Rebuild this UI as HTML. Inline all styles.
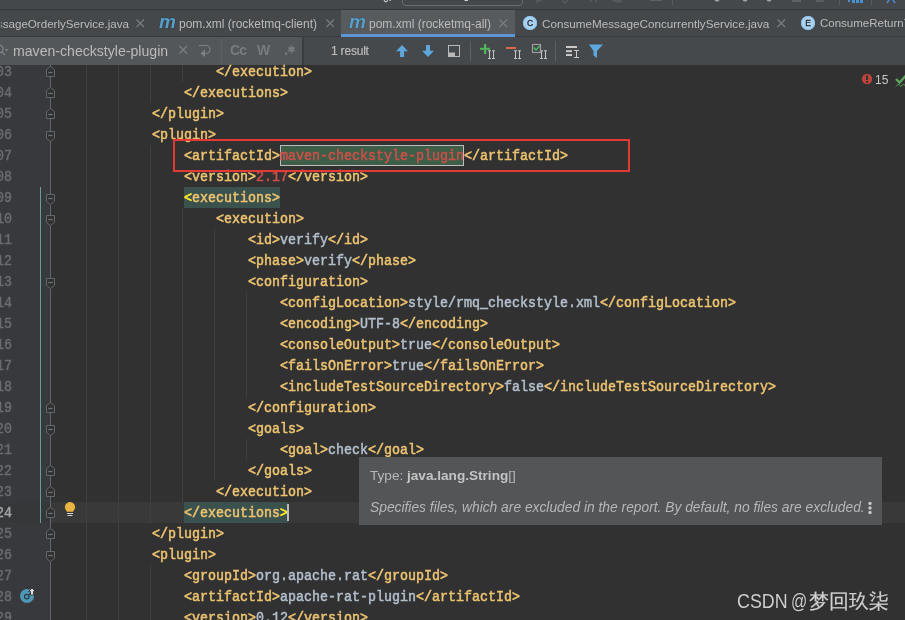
<!DOCTYPE html>
<html><head><meta charset="utf-8">
<style>
*{margin:0;padding:0;box-sizing:border-box}
html,body{width:905px;height:620px;overflow:hidden;background:#313131}
body{position:relative;font-family:"Liberation Sans",sans-serif;-webkit-font-smoothing:antialiased}
.abs{position:absolute}
.ln{position:absolute;height:21px;line-height:21px;white-space:pre;font-family:"Liberation Mono",monospace;font-size:13.333px;}
.sc{display:inline-block;transform:scaleY(1.15);transform-origin:0 16px;position:relative;top:1px}
.num{position:absolute;left:-12px;width:24px;text-align:right;height:21px;line-height:21px;font-family:"Liberation Mono",monospace;font-size:13.333px;color:#696C6F;-webkit-text-stroke:0.4px #696C6F}
.num.cur{color:#A4A3A3;-webkit-text-stroke:0.4px #A4A3A3}
.guide{position:absolute;width:1px;background:#404040}
.wm{top:589px;font-size:19.5px;line-height:24px;color:#CFCFCF;white-space:pre;text-shadow:0 0 1px rgba(0,0,0,0.4)}
.tabtxt{position:absolute;top:12px;height:25px;line-height:25px;font-size:12px;color:#BBBBBB;white-space:pre}
.mic{font:bold italic 19px "Liberation Sans",sans-serif;color:#56A0CB;line-height:25px;text-shadow:0 0 1px rgba(0,0,0,0.55)}
.cic{width:14.2px;height:14.2px;border-radius:50%;background:#A9D3F3;box-shadow:inset 0 0 0 1px #8FC3EC;color:#2B2B2B;font:8.6px "Liberation Sans",sans-serif;-webkit-text-stroke:0.3px #2B2B2B;line-height:14.2px;text-align:center}
</style></head><body><div id="root" style="position:absolute;left:0;top:0;width:905px;height:620px;will-change:transform">
<!-- toolbar -->
<div class="abs" style="left:0;top:0;width:905px;height:9px;background:#45484A"></div>
<div class="abs" style="left:0;top:9px;width:905px;height:1px;background:#343637"></div>

<svg class="abs" style="left:0;top:0" width="905" height="9">
 <path d="M402.5 -6 V2 A3.5 3.5 0 0 0 406 5.5 H519 A3.5 3.5 0 0 0 522.5 2 V-6" fill="none" stroke="#6A6D6F" stroke-width="1"/>
 <rect x="464.5" y="-3" width="3.5" height="4" fill="#D0D0D0"/>
 <path d="M384.3 -3 V0.6 A1.6 1.6 0 0 0 387.4 0.6 V-3" fill="none" stroke="#C8C8C8" stroke-width="1.1"/><rect x="389.5" y="-3" width="1.3" height="4" fill="#C8C8C8"/>
 <path d="M536 -4 L543 0 L536 3 Z" fill="#56595B"/>
 <path d="M562 0 L565 3 M568 0 L565 3" stroke="#5A5D5F" stroke-width="1.2"/>
 <path d="M591 -3 V2 M596 -3 V2" stroke="#5A5D5F" stroke-width="1.5"/>
 <path d="M612 -3 L622 -3 L622 2 L617 3 L612 1 Z" fill="#56595B"/>
 <rect x="650" y="-4" width="12" height="5" fill="#5F6163"/>
 <rect x="672" y="-2" width="1" height="7" fill="#5A5D5F"/>
 <circle cx="717" cy="-1" r="2.5" fill="#9AA6B0"/><circle cx="745" cy="-1" r="2.5" fill="#9AA6B0"/><circle cx="769" cy="-1" r="2.5" fill="#9AA6B0"/>
 <rect x="792" y="-4" width="9" height="6" fill="#5F6163"/>
 <path d="M816 -4 H823 A4 4 0 0 1 823 2 H816 Z" fill="#5A5D5F"/>
 <rect x="839" y="-2" width="1" height="7" fill="#5A5D5F"/>
 <g fill="#4A8FCF"><rect x="848" y="-2" width="2" height="4"/><rect x="852" y="-2" width="3" height="5"/><rect x="856" y="-2" width="3" height="5"/><rect x="860" y="-2" width="3" height="5"/></g>
 <rect x="871" y="-2" width="1" height="7" fill="#5A5D5F"/>
 <path d="M887 3 L891 -3 L895 3" fill="none" stroke="#4A8FCF" stroke-width="1.5"/>
</svg>

<!-- tab bar -->
<div class="abs" style="left:0;top:10px;width:905px;height:26px;background:#45484A"></div>
<div class="abs" style="left:0;top:36px;width:905px;height:1px;background:#383A3B"></div>
<div class="abs" style="left:341px;top:10px;width:174px;height:26px;background:#575B5D"></div>
<div class="abs" style="left:341px;top:34px;width:174px;height:3px;background:#5E94D4"></div>

<div class="tabtxt" style="right:776px;font-size:11.6px;top:10.5px">essageOrderlyService.java</div><svg class="abs" style="left:136px;top:19px" width="9" height="9"><path d="M0.5 0.5 L8 8 M8 0.5 L0.5 8" stroke="#788084" stroke-width="1.1"/></svg>
<div class="abs mic" style="left:159px;top:9px">m</div><div class="tabtxt" style="left:179px">pom.xml (rocketmq-client)</div><svg class="abs" style="left:326px;top:19px" width="9" height="9"><path d="M0.5 0.5 L8 8 M8 0.5 L0.5 8" stroke="#788084" stroke-width="1.1"/></svg>
<div class="abs mic" style="left:349px;top:9px">m</div><div class="tabtxt" style="left:369px">pom.xml (rocketmq-all)</div><svg class="abs" style="left:499px;top:19px" width="9" height="9"><path d="M0.5 0.5 L8 8 M8 0.5 L0.5 8" stroke="#788084" stroke-width="1.1"/></svg>
<div class="abs cic" style="left:523px;top:16px">C</div><div class="tabtxt" style="left:542px;font-size:11.7px;top:11px">ConsumeMessageConcurrentlyService.java</div><svg class="abs" style="left:777px;top:19px" width="9" height="9"><path d="M0.5 0.5 L8 8 M8 0.5 L0.5 8" stroke="#788084" stroke-width="1.1"/></svg>
<div class="abs cic" style="left:801px;top:16px">E</div><div class="tabtxt" style="left:820px;font-size:11.5px;top:11px">ConsumeReturnType</div>
<div class="abs" style="left:0;top:10px;width:2px;height:25px;background:linear-gradient(90deg,#45484A,rgba(69,72,74,0))"></div>

<!-- search bar -->
<div class="abs" style="left:0;top:37px;width:905px;height:28px;background:#45494B"></div>
<div class="abs" style="left:0;top:37px;width:302px;height:28px;background:#535759"></div>

<svg class="abs" style="left:0;top:37px" width="905" height="28">
 <!-- magnifier partial + dropdown -->
 <circle cx="-1" cy="12" r="4" fill="none" stroke="#7D8284" stroke-width="1.3"/>
 <path d="M2 15 L5 18" stroke="#7D8284" stroke-width="1.5"/>
 <path d="M4.5 12 H8.5 L6.5 14.5 Z" fill="#7D8284"/>
 <!-- clear x -->
 <path d="M179.5 9 L187 16.5 M187 9 L179.5 16.5" stroke="#7D8284" stroke-width="1.1"/>
 <!-- return icon -->
 <path d="M199 8.5 H206 A4 4 0 0 1 206 16.5 H203" fill="none" stroke="#7D8284" stroke-width="1.2"/>
 <path d="M200.5 16.5 L205 12.5 V20 Z" fill="#7D8284"/>
 <!-- separators -->
 <rect x="221" y="2" width="1" height="25" fill="#5C6062"/>
 <rect x="302" y="0" width="2" height="28" fill="#3B3E40"/>
 <!-- up arrow -->
 <path d="M402 8 L408 14.2 H404.1 V20 H400.1 V14.2 H396 Z" fill="#5FA7DA"/>
 <!-- down arrow -->
 <path d="M426 8 H430 V13.8 H434 L428 20 L422 13.8 H426 Z" fill="#5FA7DA"/>
 <!-- box -->
 <rect x="448.5" y="8.5" width="11" height="11" fill="none" stroke="#B9B9B9"/>
 <rect x="448.5" y="15.5" width="6.5" height="4" fill="#B9B9B9"/>
 <rect x="470" y="4" width="1" height="20" fill="#5C6062"/>
 <!-- plus -->
 <rect x="480" y="10.8" width="10" height="2" fill="#4FB95A"/>
 <rect x="484" y="7" width="2.2" height="10" fill="#4FB95A"/>
 <g fill="none" stroke="#C4C4C4" stroke-width="1">
  <path d="M488 13.8 H491 M489.5 13.8 V21.5 M488 21.5 H491 M492 13.8 H495 M493.5 13.8 V21.5 M492 21.5 H495"/>
  <path d="M514 13.8 H517 M515.5 13.8 V21.5 M514 21.5 H517 M518 13.8 H521 M519.5 13.8 V21.5 M518 21.5 H521"/>
  <path d="M540 13.8 H543 M541.5 13.8 V21.5 M540 21.5 H543 M544 13.8 H547 M545.5 13.8 V21.5 M544 21.5 H547"/>
 </g>
 <!-- minus -->
 <rect x="506" y="10" width="10" height="2" fill="#D8674B"/>
 <!-- checkbox -->
 <rect x="532.5" y="7.5" width="8" height="8" fill="none" stroke="#9C9C9C" stroke-width="1.2"/>
 <path d="M533.8 10.5 L536 13 L540 8.8" fill="none" stroke="#4FB95A" stroke-width="1.5"/>
 <rect x="555" y="4" width="1" height="20" fill="#5C6062"/>
 <!-- list icon -->
 <g fill="#C8C8C8"><rect x="566" y="9" width="11" height="2"/><rect x="566" y="13.2" width="6" height="2"/><rect x="566" y="17" width="6" height="2"/></g>
 <path d="M574 13.5 H579 M576.5 13.5 V20.5 M574 20.5 H579" stroke="#C8C8C8" stroke-width="1" fill="none"/>
 <!-- funnel -->
 <path d="M589 7.5 H603 L597 14 V21 L593.5 18.5 V14 Z" fill="#5DA8DC"/>
</svg>
<div class="abs" style="left:13px;top:37px;height:28px;line-height:28px;font-size:14.1px;color:#BBBBBB;white-space:pre">maven-checkstyle-plugin</div>
<div class="abs" style="left:230px;top:36px;height:28px;line-height:28px;font-size:14px;font-weight:bold;color:#777C7F;white-space:pre;letter-spacing:-0.8px">Cc</div>
<div class="abs" style="left:257px;top:36px;height:28px;line-height:28px;font-size:14px;font-weight:bold;color:#777C7F;white-space:pre">W</div>
<svg class="abs" style="left:280px;top:37px" width="20" height="28"><rect x="5" y="15.5" width="2.2" height="2.2" fill="#777C7F"/><path d="M11.5 8.5 V16 M8.3 10.4 L14.7 14.1 M8.3 14.1 L14.7 10.4" stroke="#777C7F" stroke-width="1.7"/></svg>
<div class="abs" style="left:331px;top:37px;height:28px;line-height:28px;font-size:12px;letter-spacing:-0.2px;color:#BBBBBB;-webkit-text-stroke:0.2px #BBBBBB;white-space:pre">1 result</div>

<!-- editor -->
<div class="abs" style="left:0;top:65px;width:50px;height:555px;background:#37393C"></div>
<div class="abs" style="left:51px;top:502px;width:854px;height:21px;background:#393939"></div>
<div class="abs" style="left:0;top:502px;width:50px;height:21px;background:#363738"></div>
<div class="guide" style="left:86px;top:65px;height:555px"></div><div class="guide" style="left:118px;top:65px;height:555px"></div><div class="guide" style="left:150px;top:65px;height:38px"></div><div class="guide" style="left:150px;top:145px;height:378px"></div><div class="guide" style="left:150px;top:565px;height:55px"></div><div class="guide" style="left:182px;top:65px;height:17px"></div><div class="guide" style="left:182px;top:208px;height:294px"></div><div class="guide" style="left:214px;top:229px;height:252px"></div><div class="guide" style="left:246px;top:292px;height:105px"></div><div class="guide" style="left:246px;top:439px;height:21px"></div>
<div class="abs" style="left:280px;top:145px;width:184px;height:21px;background:#3F5E47;border:1px solid #BDBDBD"></div>
<div class="abs" style="left:184px;top:187px;width:96px;height:21px;background:#3B514D"></div>
<div class="abs" style="left:184px;top:502px;width:104px;height:21px;background:#3B514D"></div>
<div class="abs" style="left:40px;top:187px;width:1.4px;height:336px;background:#6A9C95"></div>
<svg class="abs" width="905" height="620" style="left:0;top:0"><line x1="50.5" y1="65" x2="50.5" y2="620" stroke="#636669"/><path d="M46.5 69.5 L50.5 66.5 L54.5 69.5 V76.5 H46.5 Z" fill="#313131" stroke="#636669"/><path d="M48.3 72.5 H52.7" stroke="#6E7174" stroke-width="1.3"/><path d="M46.5 90.5 L50.5 87.5 L54.5 90.5 V97.5 H46.5 Z" fill="#313131" stroke="#636669"/><path d="M48.3 93.5 H52.7" stroke="#6E7174" stroke-width="1.3"/><path d="M46.5 111.5 L50.5 108.5 L54.5 111.5 V118.5 H46.5 Z" fill="#313131" stroke="#636669"/><path d="M48.3 114.5 H52.7" stroke="#6E7174" stroke-width="1.3"/><path d="M46.5 405.5 L50.5 402.5 L54.5 405.5 V412.5 H46.5 Z" fill="#313131" stroke="#636669"/><path d="M48.3 408.5 H52.7" stroke="#6E7174" stroke-width="1.3"/><path d="M46.5 468.5 L50.5 465.5 L54.5 468.5 V475.5 H46.5 Z" fill="#313131" stroke="#636669"/><path d="M48.3 471.5 H52.7" stroke="#6E7174" stroke-width="1.3"/><path d="M46.5 489.5 L50.5 486.5 L54.5 489.5 V496.5 H46.5 Z" fill="#313131" stroke="#636669"/><path d="M48.3 492.5 H52.7" stroke="#6E7174" stroke-width="1.3"/><path d="M46.5 510.5 L50.5 507.5 L54.5 510.5 V517.5 H46.5 Z" fill="#313131" stroke="#636669"/><path d="M48.3 513.5 H52.7" stroke="#6E7174" stroke-width="1.3"/><path d="M46.5 531.5 L50.5 528.5 L54.5 531.5 V538.5 H46.5 Z" fill="#313131" stroke="#636669"/><path d="M48.3 534.5 H52.7" stroke="#6E7174" stroke-width="1.3"/><path d="M46.5 131.5 H54.5 V138.5 L50.5 141.5 L46.5 138.5 Z" fill="#313131" stroke="#636669"/><path d="M48.3 135.5 H52.7" stroke="#6E7174" stroke-width="1.3"/><path d="M46.5 194.5 H54.5 V201.5 L50.5 204.5 L46.5 201.5 Z" fill="#313131" stroke="#636669"/><path d="M48.3 198.5 H52.7" stroke="#6E7174" stroke-width="1.3"/><path d="M46.5 215.5 H54.5 V222.5 L50.5 225.5 L46.5 222.5 Z" fill="#313131" stroke="#636669"/><path d="M48.3 219.5 H52.7" stroke="#6E7174" stroke-width="1.3"/><path d="M46.5 278.5 H54.5 V285.5 L50.5 288.5 L46.5 285.5 Z" fill="#313131" stroke="#636669"/><path d="M48.3 282.5 H52.7" stroke="#6E7174" stroke-width="1.3"/><path d="M46.5 425.5 H54.5 V432.5 L50.5 435.5 L46.5 432.5 Z" fill="#313131" stroke="#636669"/><path d="M48.3 429.5 H52.7" stroke="#6E7174" stroke-width="1.3"/><path d="M46.5 551.5 H54.5 V558.5 L50.5 561.5 L46.5 558.5 Z" fill="#313131" stroke="#636669"/><path d="M48.3 555.5 H52.7" stroke="#6E7174" stroke-width="1.3"/></svg>
<div class="num" style="top:61px"><span class="sc">103</span></div><div class="num" style="top:82px"><span class="sc">104</span></div><div class="num" style="top:103px"><span class="sc">105</span></div><div class="num" style="top:124px"><span class="sc">106</span></div><div class="num" style="top:145px"><span class="sc">107</span></div><div class="num" style="top:166px"><span class="sc">108</span></div><div class="num" style="top:187px"><span class="sc">109</span></div><div class="num" style="top:208px"><span class="sc">110</span></div><div class="num" style="top:229px"><span class="sc">111</span></div><div class="num" style="top:250px"><span class="sc">112</span></div><div class="num" style="top:271px"><span class="sc">113</span></div><div class="num" style="top:292px"><span class="sc">114</span></div><div class="num" style="top:313px"><span class="sc">115</span></div><div class="num" style="top:334px"><span class="sc">116</span></div><div class="num" style="top:355px"><span class="sc">117</span></div><div class="num" style="top:376px"><span class="sc">118</span></div><div class="num" style="top:397px"><span class="sc">119</span></div><div class="num" style="top:418px"><span class="sc">120</span></div><div class="num" style="top:439px"><span class="sc">121</span></div><div class="num" style="top:460px"><span class="sc">122</span></div><div class="num" style="top:481px"><span class="sc">123</span></div><div class="num cur" style="top:502px"><span class="sc">124</span></div><div class="num" style="top:523px"><span class="sc">125</span></div><div class="num" style="top:544px"><span class="sc">126</span></div><div class="num" style="top:565px"><span class="sc">127</span></div><div class="num" style="top:586px"><span class="sc">128</span></div><div class="num" style="top:607px"><span class="sc">129</span></div>
<div class="ln" style="top:61px;left:216px"><span class="sc"><span style="color:#EBC271;-webkit-text-stroke:0.5px #EBC271">&lt;/execution&gt;</span></span></div><div class="ln" style="top:82px;left:184px"><span class="sc"><span style="color:#EBC271;-webkit-text-stroke:0.5px #EBC271">&lt;/executions&gt;</span></span></div><div class="ln" style="top:103px;left:152px"><span class="sc"><span style="color:#EBC271;-webkit-text-stroke:0.5px #EBC271">&lt;/plugin&gt;</span></span></div><div class="ln" style="top:124px;left:152px"><span class="sc"><span style="color:#EBC271;-webkit-text-stroke:0.5px #EBC271">&lt;plugin&gt;</span></span></div><div class="ln" style="top:145px;left:184px"><span class="sc"><span style="color:#EBC271;-webkit-text-stroke:0.5px #EBC271">&lt;artifactId&gt;</span><span style="color:#C9504B;-webkit-text-stroke:0.5px #C9504B">maven-checkstyle-plugin</span><span style="color:#EBC271;-webkit-text-stroke:0.5px #EBC271">&lt;/artifactId&gt;</span></span></div><div class="ln" style="top:166px;left:184px"><span class="sc"><span style="color:#EBC271;-webkit-text-stroke:0.5px #EBC271">&lt;version&gt;</span><span style="color:#C9504B;-webkit-text-stroke:0.5px #C9504B">2.17</span><span style="color:#EBC271;-webkit-text-stroke:0.5px #EBC271">&lt;/version&gt;</span></span></div><div class="ln" style="top:187px;left:184px"><span class="sc"><span style="color:#FFEF28;-webkit-text-stroke:0.5px #FFEF28">&lt;</span><span style="color:#EBC271;-webkit-text-stroke:0.5px #EBC271">executions&gt;</span></span></div><div class="ln" style="top:208px;left:216px"><span class="sc"><span style="color:#EBC271;-webkit-text-stroke:0.5px #EBC271">&lt;execution&gt;</span></span></div><div class="ln" style="top:229px;left:248px"><span class="sc"><span style="color:#EBC271;-webkit-text-stroke:0.5px #EBC271">&lt;id&gt;</span><span style="color:#B2BECB;-webkit-text-stroke:0.5px #B2BECB">verify</span><span style="color:#EBC271;-webkit-text-stroke:0.5px #EBC271">&lt;/id&gt;</span></span></div><div class="ln" style="top:250px;left:248px"><span class="sc"><span style="color:#EBC271;-webkit-text-stroke:0.5px #EBC271">&lt;phase&gt;</span><span style="color:#B2BECB;-webkit-text-stroke:0.5px #B2BECB">verify</span><span style="color:#EBC271;-webkit-text-stroke:0.5px #EBC271">&lt;/phase&gt;</span></span></div><div class="ln" style="top:271px;left:248px"><span class="sc"><span style="color:#EBC271;-webkit-text-stroke:0.5px #EBC271">&lt;configuration&gt;</span></span></div><div class="ln" style="top:292px;left:280px"><span class="sc"><span style="color:#EBC271;-webkit-text-stroke:0.5px #EBC271">&lt;configLocation&gt;</span><span style="color:#B2BECB;-webkit-text-stroke:0.5px #B2BECB">style/rmq_checkstyle.xml</span><span style="color:#EBC271;-webkit-text-stroke:0.5px #EBC271">&lt;/configLocation&gt;</span></span></div><div class="ln" style="top:313px;left:280px"><span class="sc"><span style="color:#EBC271;-webkit-text-stroke:0.5px #EBC271">&lt;encoding&gt;</span><span style="color:#B2BECB;-webkit-text-stroke:0.5px #B2BECB">UTF-8</span><span style="color:#EBC271;-webkit-text-stroke:0.5px #EBC271">&lt;/encoding&gt;</span></span></div><div class="ln" style="top:334px;left:280px"><span class="sc"><span style="color:#EBC271;-webkit-text-stroke:0.5px #EBC271">&lt;consoleOutput&gt;</span><span style="color:#B2BECB;-webkit-text-stroke:0.5px #B2BECB">true</span><span style="color:#EBC271;-webkit-text-stroke:0.5px #EBC271">&lt;/consoleOutput&gt;</span></span></div><div class="ln" style="top:355px;left:280px"><span class="sc"><span style="color:#EBC271;-webkit-text-stroke:0.5px #EBC271">&lt;failsOnError&gt;</span><span style="color:#B2BECB;-webkit-text-stroke:0.5px #B2BECB">true</span><span style="color:#EBC271;-webkit-text-stroke:0.5px #EBC271">&lt;/failsOnError&gt;</span></span></div><div class="ln" style="top:376px;left:280px"><span class="sc"><span style="color:#EBC271;-webkit-text-stroke:0.5px #EBC271">&lt;includeTestSourceDirectory&gt;</span><span style="color:#B2BECB;-webkit-text-stroke:0.5px #B2BECB">false</span><span style="color:#EBC271;-webkit-text-stroke:0.5px #EBC271">&lt;/includeTestSourceDirectory&gt;</span></span></div><div class="ln" style="top:397px;left:248px"><span class="sc"><span style="color:#EBC271;-webkit-text-stroke:0.5px #EBC271">&lt;/configuration&gt;</span></span></div><div class="ln" style="top:418px;left:248px"><span class="sc"><span style="color:#EBC271;-webkit-text-stroke:0.5px #EBC271">&lt;goals&gt;</span></span></div><div class="ln" style="top:439px;left:280px"><span class="sc"><span style="color:#EBC271;-webkit-text-stroke:0.5px #EBC271">&lt;goal&gt;</span><span style="color:#B2BECB;-webkit-text-stroke:0.5px #B2BECB">check</span><span style="color:#EBC271;-webkit-text-stroke:0.5px #EBC271">&lt;/goal&gt;</span></span></div><div class="ln" style="top:460px;left:248px"><span class="sc"><span style="color:#EBC271;-webkit-text-stroke:0.5px #EBC271">&lt;/goals&gt;</span></span></div><div class="ln" style="top:481px;left:216px"><span class="sc"><span style="color:#EBC271;-webkit-text-stroke:0.5px #EBC271">&lt;/execution&gt;</span></span></div><div class="ln" style="top:502px;left:184px"><span class="sc"><span style="color:#EBC271;-webkit-text-stroke:0.5px #EBC271">&lt;/executions</span><span style="color:#FFEF28;-webkit-text-stroke:0.5px #FFEF28">&gt;</span></span></div><div class="ln" style="top:523px;left:152px"><span class="sc"><span style="color:#EBC271;-webkit-text-stroke:0.5px #EBC271">&lt;/plugin&gt;</span></span></div><div class="ln" style="top:544px;left:152px"><span class="sc"><span style="color:#EBC271;-webkit-text-stroke:0.5px #EBC271">&lt;plugin&gt;</span></span></div><div class="ln" style="top:565px;left:184px"><span class="sc"><span style="color:#EBC271;-webkit-text-stroke:0.5px #EBC271">&lt;groupId&gt;</span><span style="color:#B2BECB;-webkit-text-stroke:0.5px #B2BECB">org.apache.rat</span><span style="color:#EBC271;-webkit-text-stroke:0.5px #EBC271">&lt;/groupId&gt;</span></span></div><div class="ln" style="top:586px;left:184px"><span class="sc"><span style="color:#EBC271;-webkit-text-stroke:0.5px #EBC271">&lt;artifactId&gt;</span><span style="color:#B2BECB;-webkit-text-stroke:0.5px #B2BECB">apache-rat-plugin</span><span style="color:#EBC271;-webkit-text-stroke:0.5px #EBC271">&lt;/artifactId&gt;</span></span></div><div class="ln" style="top:607px;left:184px"><span class="sc"><span style="color:#EBC271;-webkit-text-stroke:0.5px #EBC271">&lt;version&gt;</span><span style="color:#B2BECB;-webkit-text-stroke:0.5px #B2BECB">0.12</span><span style="color:#EBC271;-webkit-text-stroke:0.5px #EBC271">&lt;/version&gt;</span></span></div>
<div class="abs" style="left:287px;top:504px;width:2px;height:17px;background:#BBBBBB"></div>
<!-- bulb -->
<svg class="abs" style="left:63px;top:500px" width="14" height="18">
 <path d="M7 2 A5.1 5.1 0 0 1 11.6 9.3 L10 11.7 H4 L2.4 9.3 A5.1 5.1 0 0 1 7 2 Z" fill="#EAB443"/>
 <rect x="4" y="13" width="6" height="1" fill="#D2D2D2"/><rect x="4.5" y="15" width="5" height="1" fill="#D2D2D2"/>
</svg>
<!-- implements icon -->
<svg class="abs" style="left:18px;top:586px" width="20" height="20">
 <circle cx="9" cy="10" r="7" fill="#4D98B7"/>
 <circle cx="8.8" cy="10.6" r="2.3" fill="none" stroke="#2A3A40" stroke-width="1.2"/>
 <path d="M10.6 9.2 L13 6.5" stroke="#2A3A40" stroke-width="1.2"/>
 <path d="M14 2 L17.5 5.5 H15.5 V9 H12.5 V5.5 H10.5 Z" fill="#D9D9D9" stroke="#2B2B2B" stroke-width="0.8"/>
</svg>
<!-- error count -->
<svg class="abs" style="left:861px;top:73px" width="12" height="12"><circle cx="6" cy="6" r="5.2" fill="#BC433C"/><rect x="5" y="2.5" width="2" height="4.5" fill="#313131"/><rect x="5" y="8" width="2" height="1.8" fill="#313131"/></svg>
<div class="abs" style="left:875px;top:74px;font-size:12px;line-height:13px;color:#C8C8C8">15</div>
<svg class="abs" style="left:895px;top:74px" width="12" height="14"><path d="M1 5 L4.5 8.5 L11 1.5" fill="none" stroke="#5AA65B" stroke-width="2.4"/><path d="M1 12.5 L3.5 10 L6 12.5 L8.5 10 L11 12.5" fill="none" stroke="#5AA65B" stroke-width="1"/></svg>
<!-- popup -->
<div class="abs" style="left:359px;top:457px;width:523px;height:68px;background:#535557"></div>
<div class="abs" style="left:370px;top:467px;line-height:18px;font-size:13.6px;color:#B7B7B7;white-space:pre">Type: <b style="color:#C4C4C4">java.lang.String</b>[]</div>
<div class="abs" style="left:370px;top:499px;line-height:18px;font-size:13.8px;font-style:italic;color:#B7B7B7;white-space:pre">Specifies files, which are excluded in the report. By default, no files are excluded.</div>
<svg class="abs" style="left:868px;top:501px" width="4" height="14"><circle cx="2" cy="2.4" r="1.7" fill="#C8C8C8"/><circle cx="2" cy="7" r="1.7" fill="#C8C8C8"/><circle cx="2" cy="11.5" r="1.7" fill="#C8C8C8"/></svg>
<!-- red annotation box -->
<div class="abs" style="left:173px;top:139px;width:457px;height:33px;border:2px solid #E53935"></div>
<!-- watermark -->
<div class="abs wm" style="left:737px;transform:scaleX(0.915);transform-origin:0 0">CSDN</div>
<div class="abs wm" style="left:791px;transform:scaleX(0.82);transform-origin:0 0">@</div>
<div class="abs wm" style="left:809px;font-size:19.75px;-webkit-text-stroke:0.25px #CFCFCF">梦回玖柒</div>
</div></body></html>
